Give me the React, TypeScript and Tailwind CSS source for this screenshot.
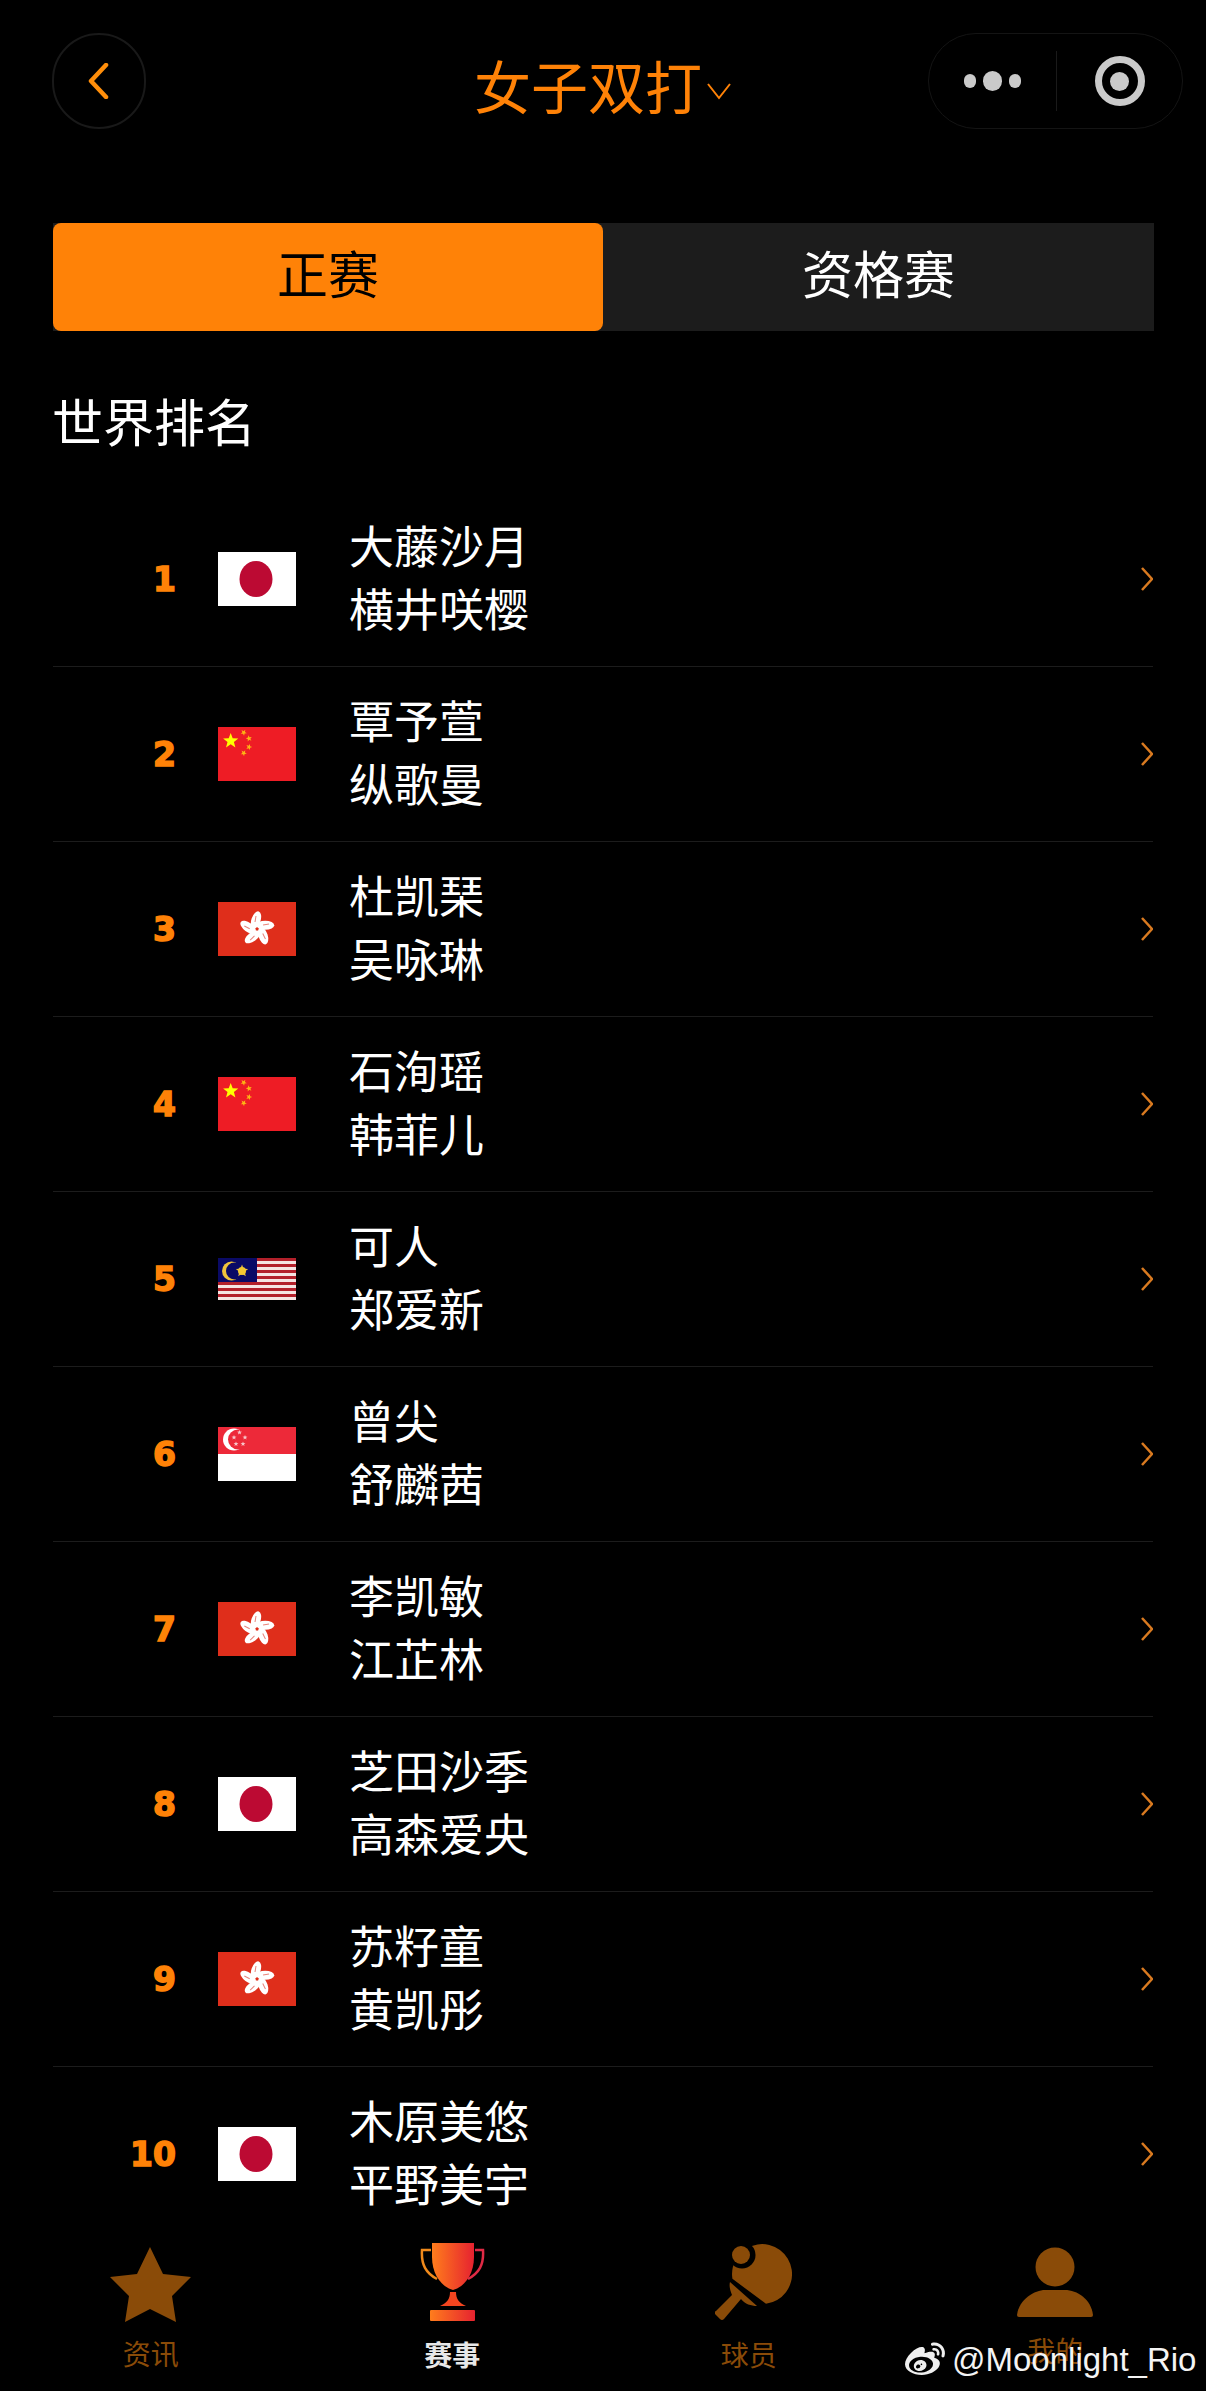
import { FaWeibo } from 'react-icons/fa';

type FlagCode = 'jp' | 'cn' | 'hk' | 'my' | 'sg';

interface Pair {
  rank: number;
  flag: FlagCode;
  names: [string, string];
}

const pairs: Pair[] = [
  { rank: 1, flag: 'jp', names: ['大藤沙月', '横井咲樱'] },
  { rank: 2, flag: 'cn', names: ['覃予萱', '纵歌曼'] },
  { rank: 3, flag: 'hk', names: ['杜凯琹', '吴咏琳'] },
  { rank: 4, flag: 'cn', names: ['石洵瑶', '韩菲儿'] },
  { rank: 5, flag: 'my', names: ['可人', '郑爱新'] },
  { rank: 6, flag: 'sg', names: ['曾尖', '舒麟茜'] },
  { rank: 7, flag: 'hk', names: ['李凯敏', '江芷林'] },
  { rank: 8, flag: 'jp', names: ['芝田沙季', '高森爱央'] },
  { rank: 9, flag: 'hk', names: ['苏籽童', '黄凯彤'] },
  { rank: 10, flag: 'jp', names: ['木原美悠', '平野美宇'] },
];

function starPoints(cx: number, cy: number, r: number, rot = -90) {
  const pts: string[] = [];
  for (let i = 0; i < 10; i++) {
    const rad = i % 2 === 0 ? r : r * 0.42;
    const a = ((rot + i * 36) * Math.PI) / 180;
    pts.push(`${cx + rad * Math.cos(a)},${cy + rad * Math.sin(a)}`);
  }
  return pts.join(' ');
}

function Flag({ code }: { code: FlagCode }) {
  if (code === 'jp') {
    return (
      <svg className="w-[78px] h-[54px] block" viewBox="0 0 78 54">
        <rect width="78" height="54" fill="#fff" />
        <ellipse cx="38" cy="27" rx="16.5" ry="18" fill="#bc0a33" />
      </svg>
    );
  }
  if (code === 'cn') {
    return (
      <svg className="w-[78px] h-[54px] block" viewBox="0 0 78 54">
        <rect width="78" height="54" fill="#ee1c25" />
        <polygon points={starPoints(12.7, 14, 8)} fill="#ffff00" />
        <polygon points={starPoints(25.7, 5.5, 3.2, -60)} fill="#fdb515" />
        <polygon points={starPoints(31, 11.5, 3.2, -30)} fill="#fdb515" />
        <polygon points={starPoints(31, 20, 3.2, 0)} fill="#fdb515" />
        <polygon points={starPoints(25.7, 26, 3.2, -60)} fill="#fdb515" />
      </svg>
    );
  }
  if (code === 'hk') {
    return (
      <svg className="w-[78px] h-[54px] block" viewBox="0 0 78 54">
        <rect width="78" height="54" fill="#df2e1b" />
        {[0, 72, 144, 216, 288].map((a) => (
          <g key={a} transform={`rotate(${a} 39 27)`}>
            <ellipse cx="38" cy="18" rx="4.6" ry="9" transform="rotate(18 38 18)" fill="#fff" />
            <path d="M38 14 L37 20" stroke="#e8837a" strokeWidth="1" />
          </g>
        ))}
      </svg>
    );
  }
  if (code === 'my') {
    return (
      <svg className="w-[78px] h-[42px] block" viewBox="0 0 78 42">
        <rect width="78" height="42" fill="#f5e4e2" />
        {[0, 6, 12, 18, 24, 30, 36].map((y) => (
          <rect key={y} y={y} width="78" height="3" fill="#b3202a" />
        ))}
        <rect width="39" height="24" fill="#0a0a66" />
        <circle cx="13.5" cy="13" r="9.5" fill="#f0c33c" />
        <circle cx="16.5" cy="13" r="8.5" fill="#0a0a66" />
        <polygon points={starPoints(24, 13, 6.5)} fill="#f0c33c" />
        <circle cx="24" cy="13" r="4" fill="#f5c832" />
      </svg>
    );
  }
  return (
    <svg className="w-[78px] h-[54px] block" viewBox="0 0 78 54">
      <rect width="78" height="27" fill="#ed2939" />
      <rect y="27" width="78" height="27" fill="#fff" />
      <circle cx="16" cy="12.5" r="11" fill="#fff" />
      <circle cx="20" cy="12.5" r="10" fill="#ed2939" />
      <polygon points={starPoints(21.5, 5.5, 2.6)} fill="#f7c4c8" />
      <polygon points={starPoints(16, 10.5, 2.6)} fill="#f7c4c8" />
      <polygon points={starPoints(27, 10.5, 2.6)} fill="#f7c4c8" />
      <polygon points={starPoints(18, 17, 2.6)} fill="#f7c4c8" />
      <polygon points={starPoints(25, 17, 2.6)} fill="#f7c4c8" />
    </svg>
  );
}

function StarIcon() {
  return (
    <svg className="w-[81px] h-[75px]" viewBox="0 0 81 75">
      <polygon points="40,0 53,27 81,30 62,49 66,75 40,62 15,75 19,49 0,30 27,27" fill="#8a4b08" />
    </svg>
  );
}

function TrophyIcon() {
  return (
    <svg className="w-[65px] h-[78px]" viewBox="0 0 65 78">
      <defs>
        <linearGradient id="cup" x1="0" x2="1" y1="0" y2="0">
          <stop offset="0" stopColor="#ff7d1c" />
          <stop offset="1" stopColor="#e62230" />
        </linearGradient>
      </defs>
      <path d="M12 0 H54 V14 C54 32 44 44 33 47 C22 44 12 32 12 14Z" fill="url(#cup)" />
      <path d="M11 7 H2 C1 22 6 30 17 36" fill="none" stroke="#f08a1c" strokeWidth="2.5" />
      <path d="M55 7 H63 C64 22 59 30 48 36" fill="none" stroke="#e02a45" strokeWidth="2.5" />
      <path d="M30 49 H36 C36 56 39 60 46 63 H20 C27 60 30 56 30 49Z" fill="#f4451f" />
      <rect x="10" y="67" width="45" height="11" rx="1" fill="url(#cup)" />
    </svg>
  );
}

function PaddleIcon() {
  return (
    <svg className="w-[77px] h-[76px]" viewBox="0 0 77 76">
      <path d="M17.4 34.8 A30 30 0 1 1 51 59.8Z" fill="#8a4b08" />
      <circle cx="27" cy="11" r="13.5" fill="#000" />
      <circle cx="26" cy="11" r="9" fill="#8a4b08" />
      <path
        d="M15 38 L42 62 C36 62 30 60 26 55 L9 75 Q7 77 5 75 L0 70 Q-1 68 1 67 L17 51 C15 46 14 42 15 38Z"
        fill="#8a4b08"
      />
    </svg>
  );
}

function PersonIcon() {
  return (
    <svg className="w-[76px] h-[70px]" viewBox="0 0 76 70">
      <circle cx="38" cy="20" r="19.5" fill="#8a4b08" />
      <path d="M0 68 C2 52 18 43 28 43 H48 C60 43 74 52 76 68 Q76 70 74 70 H2 Q0 70 0 68Z" fill="#8a4b08" />
    </svg>
  );
}

const cjk = "font-['Noto_Sans_CJK_SC','Liberation_Sans',sans-serif]";

export default function App() {
  return (
    <div className={`relative w-[1206px] h-[2391px] bg-black flex flex-col overflow-hidden ${cjk}`}>
      {/* 顶部导航 */}
      <div className="flex items-center h-[96px] mt-[33px] shrink-0">
        <div className="ml-[52px] w-[94px] h-[96px] rounded-full border-2 border-[#191919] flex items-center justify-center">
          <svg className="w-[24px] h-[36px] -ml-[3px]" viewBox="0 0 24 36" fill="none">
            <path d="M20 2 L5 18 L20 34" stroke="#ff8e0a" strokeWidth="4.5" strokeLinecap="round" strokeLinejoin="round" />
          </svg>
        </div>
        <div className="ml-[328px] mt-[6px] flex items-center text-[#ff8207] text-[57px] leading-[64px]">
          <span>女子双打</span>
          <svg className="w-[26px] h-[18px] ml-[4px] mt-[14px]" viewBox="0 0 26 18" fill="none">
            <path d="M2 2 L13 16 L24 2" stroke="#ff8207" strokeWidth="2" />
          </svg>
        </div>
        <div className="ml-auto mr-[23px] w-[255px] h-[96px] rounded-[48px] border border-[#141414] flex items-center">
          <div className="w-[127px] flex items-center justify-center gap-[7px]">
            <span className="w-[12px] h-[14px] rounded-full bg-[#cacaca]" />
            <span className="w-[19px] h-[20px] rounded-full bg-[#cacaca]" />
            <span className="w-[12px] h-[14px] rounded-full bg-[#cacaca]" />
          </div>
          <span className="w-px h-[60px] bg-[#1a1a1a]" />
          <div className="flex-1 flex items-center justify-center">
            <span className="w-[50px] h-[50px] rounded-full border-[7px] border-[#cacaca] flex items-center justify-center">
              <span className="w-[19px] h-[19px] rounded-full bg-[#cacaca]" />
            </span>
          </div>
        </div>
      </div>

      {/* 正赛 / 资格赛 */}
      <div className="mt-[94px] mx-[53px] w-[1101px] h-[108px] flex bg-[#1c1c1c] shrink-0">
        <div className="w-[550px] pb-[10px] bg-[#ff8207] rounded-[8px] flex items-center justify-center text-black text-[51px] leading-none">
          正赛
        </div>
        <div className="flex-1 pb-[10px] flex items-center justify-center text-white text-[51px] leading-none">资格赛</div>
      </div>

      <div className="mt-[59px] mb-[42px] ml-[52px] h-[60px] flex items-center text-white text-[51px] leading-none shrink-0">
        世界排名
      </div>

      {/* 排名列表 */}
      <div className="flex-1 min-h-0 overflow-hidden mx-[53px]">
        {pairs.map((p) => (
          <div key={p.rank} className="h-[175px] flex items-center border-b border-[#1c1c1c]">
            <div className="w-[123px] mt-[2px] text-right text-[#ff8207] text-[33px] font-bold font-['DejaVu_Sans',sans-serif] [-webkit-text-stroke:1.5px_#ff8207]">
              {p.rank}
            </div>
            <div className="ml-[42px] w-[78px] flex justify-center">
              <Flag code={p.flag} />
            </div>
            <div className="ml-[53px] pb-[6px] flex-1 text-white text-[45px] leading-[63px]">
              <div>{p.names[0]}</div>
              <div>{p.names[1]}</div>
            </div>
            <svg className="w-[14px] h-[28px]" viewBox="0 0 14 28" fill="none">
              <path d="M3 3 L13 14 L3 25" stroke="#d97a20" strokeWidth="2.5" />
            </svg>
          </div>
        ))}
      </div>

      {/* 底部标签栏 */}
      <div className="h-[176px] shrink-0 bg-black grid grid-cols-4">
        <div className="flex flex-col items-center pt-[30px]">
          <div className="h-[78px] flex items-center"><StarIcon /></div>
          <div className="mt-[12px] text-[28px] leading-[36px] text-[#8a4b08]">资讯</div>
        </div>
        <div className="flex flex-col items-center pt-[28px]">
          <div className="h-[78px] flex items-center"><TrophyIcon /></div>
          <div className="mt-[15px] text-[28px] leading-[36px] font-bold text-[#e8e8e8]">赛事</div>
        </div>
        <div className="flex flex-col items-center pt-[29px]">
          <div className="h-[76px] flex items-center"><PaddleIcon /></div>
          <div className="mt-[16px] mr-[10px] text-[28px] leading-[36px] text-[#8a4b08]">球员</div>
        </div>
        <div className="flex flex-col items-center pt-[32px]">
          <div className="h-[70px] flex items-center"><PersonIcon /></div>
          <div className="mt-[15px] text-[28px] leading-[36px] text-[#8a4b08]">我的</div>
        </div>
      </div>

      {/* 水印 */}
      <div className="absolute left-[902px] top-[2340px] flex items-center text-[#f4f4f4] text-[33px] leading-[40px] font-['Liberation_Sans',sans-serif]">
        <FaWeibo className="w-[46px] h-[40px] text-[#eeeeee]" />
        <span className="ml-[4px]">@Moonlight_Rio</span>
      </div>
    </div>
  );
}
